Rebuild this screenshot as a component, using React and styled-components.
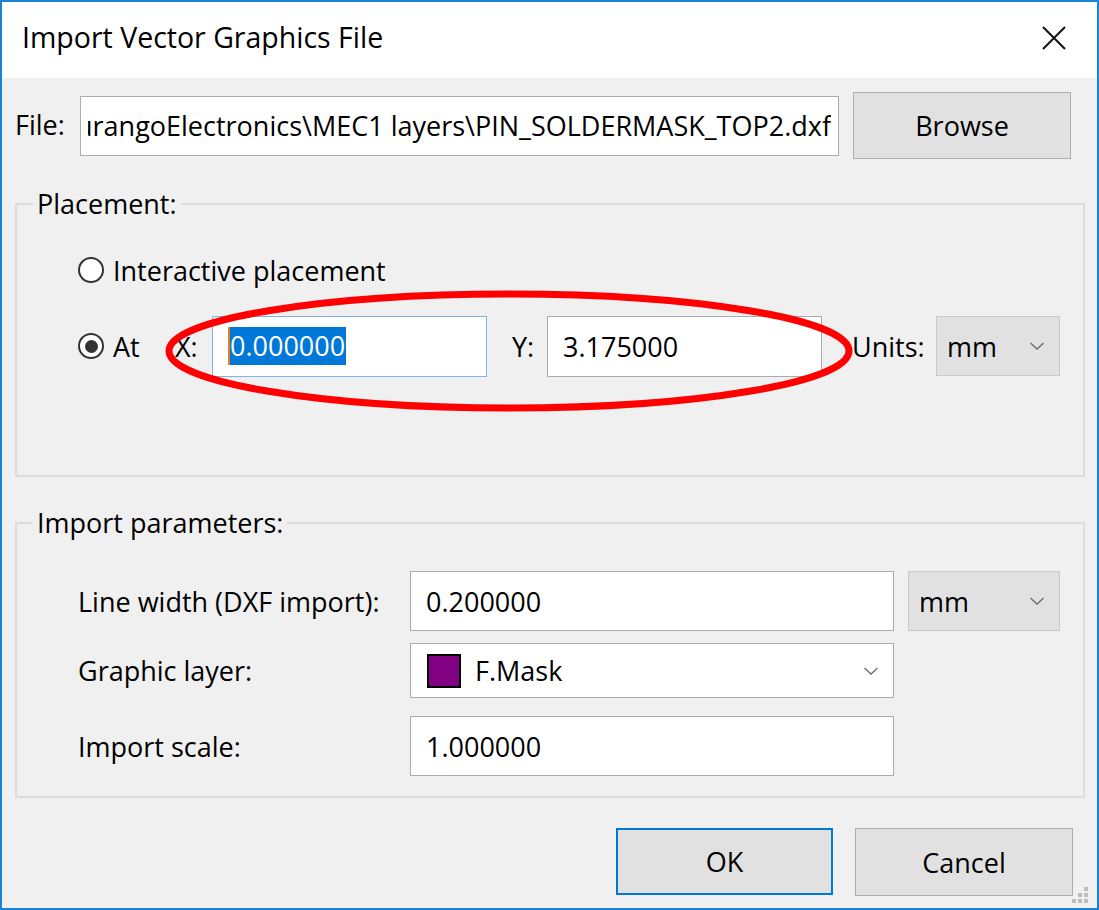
import React from 'react';
import styled, { createGlobalStyle } from 'styled-components';

const GlobalStyle = createGlobalStyle`
  html, body {
    margin: 0;
    padding: 0;
    background: #f0f0f0;
  }
  * {
    box-sizing: border-box;
  }
`;

const Chevron = () => (
  <svg width="16" height="10" viewBox="0 0 16 10">
    <polyline points="1.5,2 8,8 14.5,2" fill="none" stroke="#6a6a6a" strokeWidth="1.3" />
  </svg>
);

const App = () => {
  return (
    <Window>
      <GlobalStyle />
      <TitleBar>
        <Title>Import Vector Graphics File</Title>
        <CloseButton>
          <svg width="24" height="24" viewBox="0 0 24 24">
            <path d="M1 1 L23 23 M23 1 L1 23" stroke="#111" strokeWidth="2" fill="none" />
          </svg>
        </CloseButton>
      </TitleBar>

      <Content>
        <FileRow>
          <FileLabel>File:</FileLabel>
          <TextBox width={759} height={60} padLeft={7}>
            <TextClip>{'C:\\Projects\\DurangoElectronics\\MEC1 layers\\PIN_SOLDERMASK_TOP2.dxf'}</TextClip>
          </TextBox>
          <Button width={218} height={67} style={{ marginLeft: 14 }}>Browse</Button>
        </FileRow>

        <Group top={27}>
          <Legend>Placement:</Legend>
          <Rows>
            <RadioRow height={40} top={28}>
              <Radio />
              <RadioText>Interactive placement</RadioText>
            </RadioRow>
            <RadioRow height={60} top={26}>
              <AtOption>
                <Radio checked />
                <RadioText>At</RadioText>
              </AtOption>
              <FieldLabel width={37}>X:</FieldLabel>
              <TextBox width={275} height={61} padLeft={15} focused>
                <Selected>0.000000</Selected>
              </TextBox>
              <FieldLabel width={35} gap={25}>Y:</FieldLabel>
              <TextBox width={275} height={61} padLeft={15}>3.175000</TextBox>
              <FieldLabel width={84} gap={30}>Units:</FieldLabel>
              <Combo width={124} height={60}>
                <span>mm</span>
                <Chevron />
              </Combo>
            </RadioRow>
          </Rows>
          <GroupSpacer height={99} />
        </Group>

        <Group top={28}>
          <Legend>Import parameters:</Legend>
          <Rows>
            <ParamRow height={60} top={30}>
              <ParamLabel>Line width (DXF import):</ParamLabel>
              <TextBox width={484} height={60} padLeft={15}>0.200000</TextBox>
              <Combo width={152} height={60} style={{ marginLeft: 14 }}>
                <span>mm</span>
                <Chevron />
              </Combo>
            </ParamRow>
            <ParamRow height={55} top={12}>
              <ParamLabel>Graphic layer:</ParamLabel>
              <Combo width={484} height={55} light>
                <LayerValue>
                  <Swatch color="#820082" />
                  <span>F.Mask</span>
                </LayerValue>
                <Chevron />
              </Combo>
            </ParamRow>
            <ParamRow height={60} top={18}>
              <ParamLabel>Import scale:</ParamLabel>
              <TextBox width={484} height={60} padLeft={15}>1.000000</TextBox>
            </ParamRow>
          </Rows>
          <GroupSpacer height={20} />
        </Group>

        <ButtonRow>
          <Button width={217} height={67} primary>OK</Button>
          <Button width={218} height={68}>Cancel</Button>
        </ButtonRow>
      </Content>

      <Annotation width="1095" height="906" viewBox="0 0 1095 906">
        <ellipse cx="507" cy="349" rx="340" ry="57" fill="none" stroke="#ff0000" strokeWidth="7" />
      </Annotation>

      <Grip>
        <GripDot style={{ gridColumn: 3, gridRow: 1 }} />
        <GripDot style={{ gridColumn: 2, gridRow: 2 }} />
        <GripDot style={{ gridColumn: 3, gridRow: 2 }} />
        <GripDot style={{ gridColumn: 1, gridRow: 3 }} />
        <GripDot style={{ gridColumn: 2, gridRow: 3 }} />
        <GripDot style={{ gridColumn: 3, gridRow: 3 }} />
      </Grip>
    </Window>
  );
};

export default App;

const Window = styled.div`
  position: relative;
  width: 1099px;
  height: 910px;
  border: 2px solid #1883d7;
  background: #f0f0f0;
  display: flex;
  flex-direction: column;
  overflow: hidden;
  font-family: "Segoe UI", "Open Sans", "Noto Sans", sans-serif;
  font-size: 27px;
  color: #000;
`;

const TitleBar = styled.div`
  height: 76px;
  background: #fff;
  display: flex;
  align-items: center;
  justify-content: space-between;
  padding: 0 31px 0 20px;
  flex-shrink: 0;
`;

const Title = styled.div`
  font-size: 28.5px;
  padding-bottom: 6px;
`;

const CloseButton = styled.div`
  display: flex;
  align-items: center;
  padding-bottom: 4px;
`;

const Content = styled.div`
  padding: 14px 12px 0 13px;
  display: flex;
  flex-direction: column;
`;

const FileRow = styled.div`
  display: flex;
  align-items: center;
  height: 67px;
`;

const FileLabel = styled.div`
  width: 65px;
  flex-shrink: 0;
  padding-bottom: 2px;
`;

const TextBox = styled.div`
  width: ${p => p.width}px;
  height: ${p => p.height}px;
  flex-shrink: 0;
  background: #fff;
  border: 1px solid ${p => (p.focused ? '#7eb4ea' : '#ababab')};
  padding: 0 7px 0 ${p => p.padLeft}px;
  display: flex;
  align-items: center;
  white-space: nowrap;
  overflow: hidden;
`;

const TextClip = styled.div`
  flex: 1;
  overflow: hidden;
  display: flex;
  justify-content: flex-end;
  white-space: nowrap;
`;

const Selected = styled.span`
  background: #0078d7;
  color: #fff;
  line-height: 38px;
  padding-right: 1px;
  border-left: 2px solid #f07b1e;
`;

const Button = styled.div`
  width: ${p => p.width}px;
  height: ${p => p.height}px;
  flex-shrink: 0;
  background: #e1e1e1;
  border: ${p => (p.primary ? '2px solid #0078d7' : '1px solid #adadad')};
  display: flex;
  align-items: center;
  justify-content: center;
`;

const Group = styled.fieldset`
  margin: ${p => p.top}px 0 0 0;
  width: 1070px;
  border: 2px solid #dcdcdc;
  padding: 0 0 0 16px;
  min-width: 0;
`;

const Legend = styled.legend`
  padding: 0 4px;
  line-height: 36px;
`;

const Rows = styled.div`
  display: flex;
  flex-direction: column;
  margin-left: 45px;
`;

const GroupSpacer = styled.div`
  height: ${p => p.height}px;
`;

const RadioRow = styled.div`
  display: flex;
  align-items: center;
  height: ${p => p.height}px;
  margin-top: ${p => p.top}px;
`;

const AtOption = styled.div`
  width: 97px;
  display: flex;
  align-items: center;
  flex-shrink: 0;
`;

const Radio = styled.span`
  width: 26px;
  height: 26px;
  border-radius: 50%;
  border: 2px solid #333;
  background: #fff;
  flex-shrink: 0;
  display: flex;
  align-items: center;
  justify-content: center;
  &::after {
    content: '';
    width: 13px;
    height: 13px;
    border-radius: 50%;
    background: ${p => (p.checked ? '#333' : 'transparent')};
  }
`;

const RadioText = styled.span`
  margin-left: 9px;
`;

const FieldLabel = styled.div`
  width: ${p => p.width}px;
  margin-left: ${p => p.gap || 0}px;
  flex-shrink: 0;
`;

const Combo = styled.div`
  width: ${p => p.width}px;
  height: ${p => p.height}px;
  flex-shrink: 0;
  background: ${p => (p.light ? '#fff' : '#e1e1e1')};
  border: 1px solid ${p => (p.light ? '#ababab' : '#c8c8c8')};
  display: flex;
  align-items: center;
  justify-content: space-between;
  padding: 0 14px 0 ${p => (p.light ? 16 : 10)}px;
`;

const LayerValue = styled.div`
  display: flex;
  align-items: center;
  gap: 14px;
`;

const Swatch = styled.span`
  width: 34px;
  height: 34px;
  background: ${p => p.color};
  border: 2px solid #000;
`;

const ParamRow = styled.div`
  display: flex;
  align-items: center;
  height: ${p => p.height}px;
  margin-top: ${p => p.top}px;
`;

const ParamLabel = styled.div`
  width: 332px;
  flex-shrink: 0;
`;

const ButtonRow = styled.div`
  display: flex;
  justify-content: flex-end;
  gap: 22px;
  margin-top: 30px;
  padding-right: 12px;
`;

const Annotation = styled.svg`
  position: absolute;
  left: 0;
  top: 0;
  pointer-events: none;
`;

const Grip = styled.div`
  position: absolute;
  right: 9px;
  bottom: 5px;
  display: grid;
  grid-template-columns: repeat(3, 4px);
  grid-template-rows: repeat(3, 4px);
  gap: 2px;
`;

const GripDot = styled.span`
  background: #bdbdbd;
`;
